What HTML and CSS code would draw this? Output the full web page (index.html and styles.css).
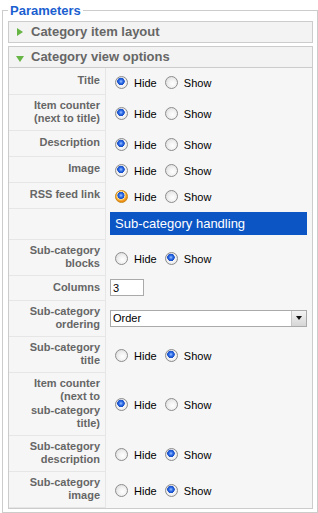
FILE: index.html
```html
<!DOCTYPE html>
<html lang="en">
    <head>
        <meta charset="UTF-8">
        <title>Category Parameters</title>
        <link rel="stylesheet" href="styles.css">
    </head>
    <body>
        <fieldset class="params">
            <legend class="params__legend">Parameters</legend>

            <div class="panel">
                <h3 class="panel__title panel__title--closed">Category item layout</h3>
            </div>

            <div class="panel">
                <h3 class="panel__title panel__title--open">Category view options</h3>
                <table class="paramlist">
                    <tr class="row--single">
                        <td class="paramlist__key">Title</td>
                        <td class="paramlist__value">
                            <label class="choice"><input type="radio" name="show_title" checked> Hide</label>
                            <label class="choice"><input type="radio" name="show_title"> Show</label>
                        </td>
                    </tr>
                    <tr>
                        <td class="paramlist__key">Item counter (next to title)</td>
                        <td class="paramlist__value">
                            <label class="choice"><input type="radio" name="show_count" checked> Hide</label>
                            <label class="choice"><input type="radio" name="show_count"> Show</label>
                        </td>
                    </tr>
                    <tr class="row--single">
                        <td class="paramlist__key">Description</td>
                        <td class="paramlist__value">
                            <label class="choice"><input type="radio" name="show_desc" checked> Hide</label>
                            <label class="choice"><input type="radio" name="show_desc"> Show</label>
                        </td>
                    </tr>
                    <tr class="row--single">
                        <td class="paramlist__key">Image</td>
                        <td class="paramlist__value">
                            <label class="choice"><input type="radio" name="show_image" checked> Hide</label>
                            <label class="choice"><input type="radio" name="show_image"> Show</label>
                        </td>
                    </tr>
                    <tr class="row--single">
                        <td class="paramlist__key">RSS feed link</td>
                        <td class="paramlist__value">
                            <label class="choice"><input type="radio" class="is-hover" name="show_rss" checked> Hide</label>
                            <label class="choice"><input type="radio" name="show_rss"> Show</label>
                        </td>
                    </tr>
                    <tr>
                        <td class="paramlist__key"></td>
                        <td class="paramlist__value">
                            <div class="spacer">Sub-category handling</div>
                        </td>
                    </tr>
                    <tr>
                        <td class="paramlist__key">Sub-category blocks</td>
                        <td class="paramlist__value">
                            <label class="choice"><input type="radio" name="show_blocks"> Hide</label>
                            <label class="choice"><input type="radio" name="show_blocks" checked> Show</label>
                        </td>
                    </tr>
                    <tr>
                        <td class="paramlist__key">Columns</td>
                        <td class="paramlist__value">
                            <input type="text" class="text-input" value="3">
                        </td>
                    </tr>
                    <tr>
                        <td class="paramlist__key">Sub-category ordering</td>
                        <td class="paramlist__value">
                            <span class="select">
                                <select class="select__box">
                                    <option>Order</option>
                                    <option>Title</option>
                                </select>
                            </span>
                        </td>
                    </tr>
                    <tr>
                        <td class="paramlist__key">Sub-category title</td>
                        <td class="paramlist__value">
                            <label class="choice"><input type="radio" name="sub_title"> Hide</label>
                            <label class="choice"><input type="radio" name="sub_title" checked> Show</label>
                        </td>
                    </tr>
                    <tr>
                        <td class="paramlist__key">Item counter (next to <span class="nowrap">sub-category</span> title)</td>
                        <td class="paramlist__value">
                            <label class="choice"><input type="radio" name="sub_count" checked> Hide</label>
                            <label class="choice"><input type="radio" name="sub_count"> Show</label>
                        </td>
                    </tr>
                    <tr>
                        <td class="paramlist__key">Sub-category description</td>
                        <td class="paramlist__value">
                            <label class="choice"><input type="radio" name="sub_desc"> Hide</label>
                            <label class="choice"><input type="radio" name="sub_desc" checked> Show</label>
                        </td>
                    </tr>
                    <tr>
                        <td class="paramlist__key">Sub-category image</td>
                        <td class="paramlist__value">
                            <label class="choice"><input type="radio" name="sub_image"> Hide</label>
                            <label class="choice"><input type="radio" name="sub_image" checked> Show</label>
                        </td>
                    </tr>
                </table>
            </div>
        </fieldset>
    </body>
</html>
```

FILE: styles.css
```css
body {
    margin: 0;
    background: #fff;
    font-family: "Liberation Sans", Arial, sans-serif;
    font-size: 11px;
    color: #000;
}

/* outer fieldset */
.params {
    width: 316px;
    box-sizing: border-box;
    margin: 3px 0 0 2px;
    padding: 3px 4px 3px 5px;
    border: 1px solid #ccc;
}

.params__legend {
    padding: 0 2px;
    font-size: 13px;
    font-weight: bold;
    color: #1b5fd0;
    line-height: 15px;
}

/* slider panels */
.panel {
    border: 1px solid #ccc;
    background: #f6f6f6;
    margin-bottom: 3px;
}

.panel:last-child {
    margin-bottom: 0;
}

.panel__title {
    position: relative;
    margin: 0;
    height: 20px;
    padding-left: 22px;
    font-size: 13px;
    font-weight: bold;
    line-height: 20px;
    color: #666;
    background: #f3f3f3;
}

.panel__title--open {
    border-bottom: 1px solid #ccc;
}

.panel__title::before {
    content: "";
    position: absolute;
    width: 0;
    height: 0;
}

.panel__title--closed::before {
    left: 8px;
    top: 6px;
    border-top: 4px solid transparent;
    border-bottom: 4px solid transparent;
    border-left: 6px solid #66b545;
}

.panel__title--open::before {
    left: 7px;
    top: 9px;
    border-left: 4px solid transparent;
    border-right: 4px solid transparent;
    border-top: 6px solid #66b545;
}

/* parameter table */
.paramlist {
    width: 100%;
    border-collapse: collapse;
    table-layout: fixed;
}

.paramlist td {
    padding: 4px 5px 4px 4px;
    vertical-align: middle;
}

.paramlist__key {
    width: 87px;
    text-align: right;
    font-weight: bold;
    color: #666;
    line-height: 13.5px;
    border-bottom: 1px solid #e6e6e6;
    border-right: 1px solid #e6e6e6;
}

.paramlist__value {
    line-height: 13px;
}

.row--single {
    height: 26px;
}

.nowrap,
.choice {
    white-space: nowrap;
}

.choice input {
    -webkit-appearance: none;
    appearance: none;
    box-sizing: border-box;
    width: 13px;
    height: 13px;
    margin: 3px 3px 0 5px;
    vertical-align: -2px;
    border: 1px solid #8d8d8d;
    border-radius: 50%;
    background: radial-gradient(circle at 60% 60%, #fff 0, #f2f2f2 40%, #d4d4d4 100%);
}

.choice input:checked {
    background:
        radial-gradient(circle at 45% 40%, #9fc4ff 0, #2a69e6 2px, #1b4fc4 3.5px, transparent 4px),
        radial-gradient(circle, #fff 0, #f0f0f0 60%, #d0d0d0 100%);
}

.choice input.is-hover {
    border-color: #c98a1e;
    background:
        radial-gradient(circle at 45% 40%, #9fc4ff 0, #2a69e6 2px, #1b4fc4 3.3px, #fbe9b6 3.8px, #f7c356 4.5px, #f08a10 6px);
}

.spacer {
    height: 23px;
    padding-left: 5px;
    background: #0b55c4;
    color: #fff;
    font-size: 13px;
    line-height: 23px;
}

.text-input {
    box-sizing: border-box;
    width: 34px;
    height: 17px;
    margin: 0;
    padding: 0 2px;
    border: 1px solid #aaa;
    font-family: "Liberation Sans", Arial, sans-serif;
    font-size: 11px;
    vertical-align: middle;
}

.select {
    position: relative;
    display: block;
}

.select__box {
    -webkit-appearance: none;
    appearance: none;
    box-sizing: border-box;
    display: block;
    width: 100%;
    height: 17px;
    margin: 0;
    padding: 0 2px;
    border: 1px solid #aaa;
    border-radius: 0;
    background: #fff;
    font-family: "Liberation Sans", Arial, sans-serif;
    font-size: 11px;
    color: #000;
}

.select::after {
    content: "";
    position: absolute;
    right: 1px;
    top: 1px;
    width: 15px;
    height: 15px;
    box-sizing: border-box;
    border-left: 1px solid #c8c8c8;
    background: linear-gradient(#f4f4f4, #d6d6d6);
}

.select::before {
    content: "";
    position: absolute;
    z-index: 1;
    right: 5px;
    top: 6px;
    border-left: 3px solid transparent;
    border-right: 3px solid transparent;
    border-top: 4px solid #111;
}
```
